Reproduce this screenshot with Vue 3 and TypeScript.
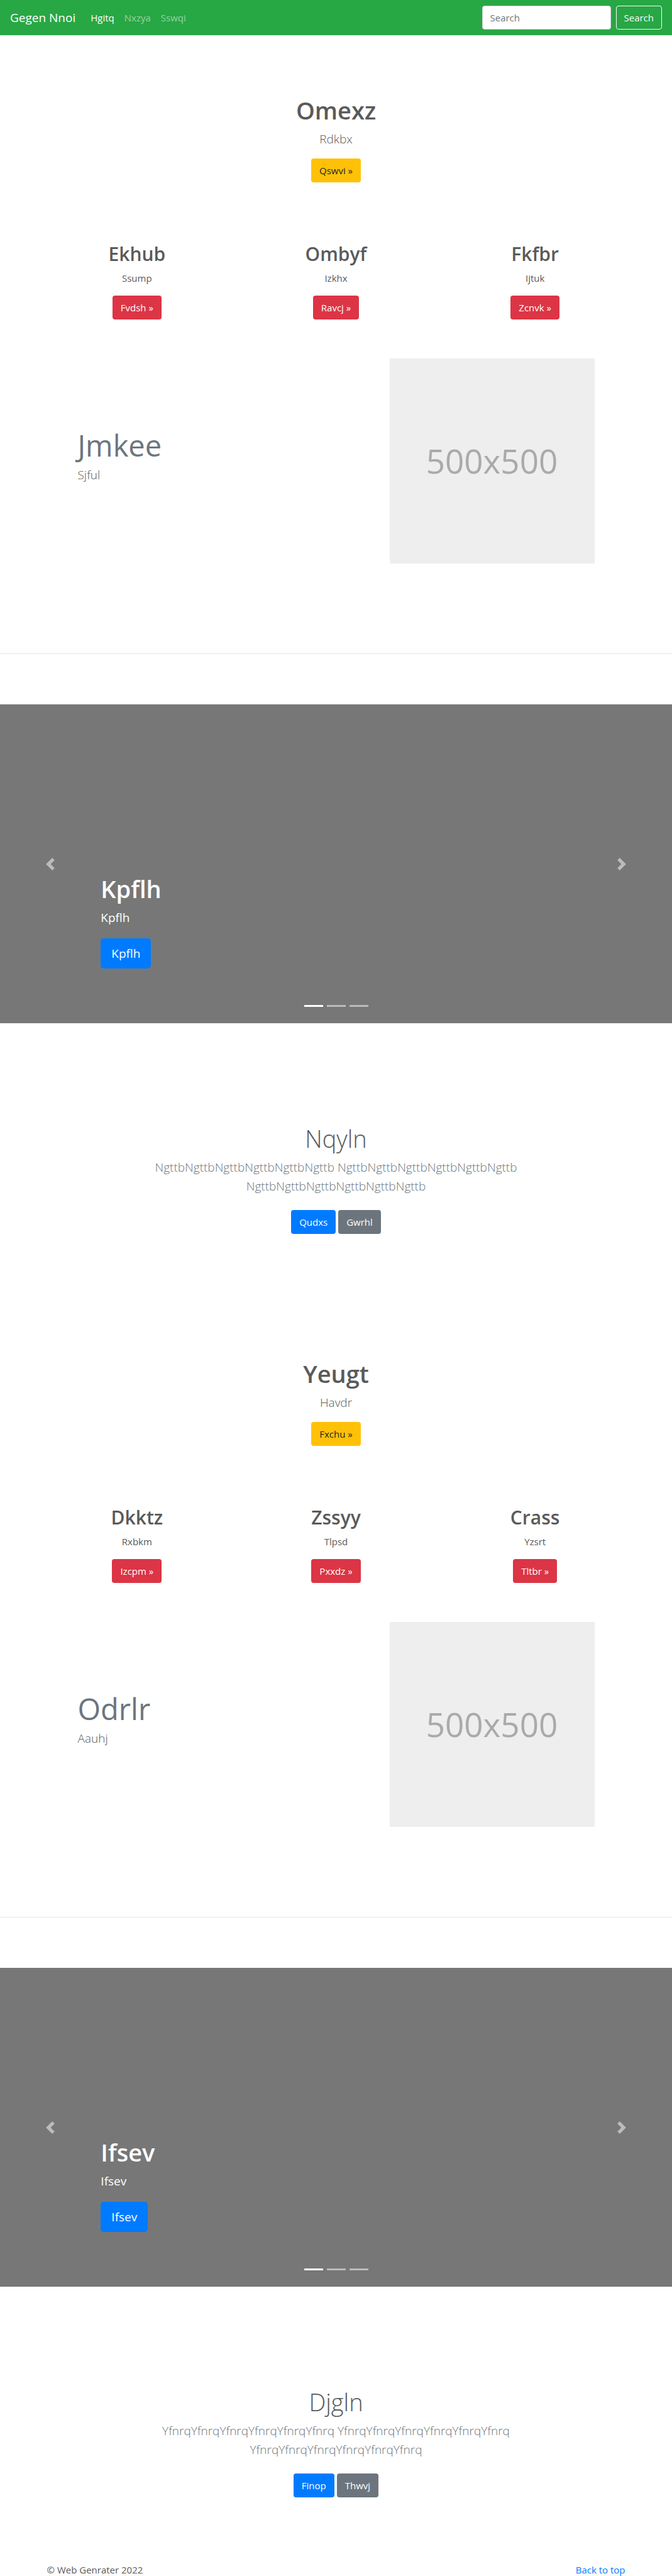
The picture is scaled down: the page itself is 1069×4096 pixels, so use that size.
<script setup lang="ts">
import { ref } from 'vue'

interface Card {
  title: string
  text: string
  action: string
}

interface Block {
  id: string
  hero: Card
  cards: Card[]
  feature: { title: string; text: string }
  slide: string
  outro: { title: string; text: string; primary: string; secondary: string }
}

const links: string[] = ['Hgitq', 'Nxzya', 'Sswqi']
const query = ref('')

const blocks: Block[] = [
  {
    id: 'first',
    hero: { title: 'Omexz', text: 'Rdkbx', action: 'Qswvi »' },
    cards: [
      { title: 'Ekhub', text: 'Ssump', action: 'Fvdsh »' },
      { title: 'Ombyf', text: 'Izkhx', action: 'Ravcj »' },
      { title: 'Fkfbr', text: 'Ijtuk', action: 'Zcnvk »' },
    ],
    feature: { title: 'Jmkee', text: 'Sjful' },
    slide: 'Kpflh',
    outro: {
      title: 'Nqyln',
      text: 'NgttbNgttbNgttbNgttbNgttbNgttb NgttbNgttbNgttbNgttbNgttbNgttb NgttbNgttbNgttbNgttbNgttbNgttb',
      primary: 'Qudxs',
      secondary: 'Gwrhl',
    },
  },
  {
    id: 'second',
    hero: { title: 'Yeugt', text: 'Havdr', action: 'Fxchu »' },
    cards: [
      { title: 'Dkktz', text: 'Rxbkm', action: 'Izcpm »' },
      { title: 'Zssyy', text: 'Tlpsd', action: 'Pxxdz »' },
      { title: 'Crass', text: 'Yzsrt', action: 'Tltbr »' },
    ],
    feature: { title: 'Odrlr', text: 'Aauhj' },
    slide: 'Ifsev',
    outro: {
      title: 'Djgln',
      text: 'YfnrqYfnrqYfnrqYfnrqYfnrqYfnrq YfnrqYfnrqYfnrqYfnrqYfnrqYfnrq YfnrqYfnrqYfnrqYfnrqYfnrqYfnrq',
      primary: 'Finop',
      secondary: 'Thwvj',
    },
  },
]
</script>

<template>
  <div id="top" class="page">
    <header class="navbar">
      <a class="brand" href="#top">Gegen Nnoi</a>
      <nav class="links">
        <a v-for="(link, i) in links" :key="link" href="#top" :class="{ active: i === 0 }">{{ link }}</a>
      </nav>
      <form class="search" @submit.prevent>
        <input v-model="query" type="search" placeholder="Search" aria-label="Search" />
        <button class="btn btn-outline" type="submit">Search</button>
      </form>
    </header>

    <main>
      <section v-for="block in blocks" :key="block.id" class="block">
        <div class="hero">
          <h1>{{ block.hero.title }}</h1>
          <p class="lead">{{ block.hero.text }}</p>
          <a class="btn btn-warning" href="#top">{{ block.hero.action }}</a>
        </div>

        <div class="cards">
          <article v-for="card in block.cards" :key="card.title" class="card">
            <h2>{{ card.title }}</h2>
            <p>{{ card.text }}</p>
            <a class="btn btn-danger" href="#top">{{ card.action }}</a>
          </article>
        </div>

        <div class="feature">
          <div class="feature-text">
            <h2>{{ block.feature.title }}</h2>
            <p class="lead">{{ block.feature.text }}</p>
          </div>
          <div class="placeholder">500x500</div>
        </div>

        <hr />

        <div class="carousel">
          <div class="caption">
            <h1>{{ block.slide }}</h1>
            <p>{{ block.slide }}</p>
            <a class="btn btn-primary btn-large" href="#top">{{ block.slide }}</a>
          </div>
          <button class="control prev" type="button" aria-label="Previous">
            <svg viewBox="0 0 8 8"><path d="M5.25 0l-4 4 4 4 1.5-1.5-2.5-2.5 2.5-2.5-1.5-1.5z" /></svg>
          </button>
          <button class="control next" type="button" aria-label="Next">
            <svg viewBox="0 0 8 8"><path d="M2.75 0l-1.5 1.5 2.5 2.5-2.5 2.5 1.5 1.5 4-4-4-4z" /></svg>
          </button>
          <div class="indicators">
            <button v-for="n in 3" :key="n" type="button" :class="{ active: n === 1 }" :aria-label="`Slide ${n}`"></button>
          </div>
        </div>

        <div class="outro">
          <h1>{{ block.outro.title }}</h1>
          <p class="lead">{{ block.outro.text }}</p>
          <div class="actions">
            <a class="btn btn-primary" href="#top">{{ block.outro.primary }}</a>
            <a class="btn btn-secondary" href="#top">{{ block.outro.secondary }}</a>
          </div>
        </div>
      </section>
    </main>

    <footer class="footer">
      <span>© Web Genrater 2022</span>
      <a href="#top">Back to top</a>
    </footer>
  </div>
</template>

<style>
body {
  margin: 0;
  background: #fff;
}
</style>

<style scoped>
.page {
  font: 400 15px/24px 'Open Sans', 'Noto Sans', sans-serif;
  color: #5a5a5a;
}

.page *,
.page *::before {
  box-sizing: border-box;
}

h1,
h2,
p {
  margin: 0;
}

a {
  color: #007bff;
  text-decoration: none;
}

h1 {
  font-size: 38px;
  line-height: 46px;
  font-weight: 600;
}

.lead {
  font-size: 19px;
  line-height: 30px;
  font-weight: 300;
}

.btn {
  display: inline-flex;
  align-items: center;
  height: 38px;
  padding: 0 12px;
  border: 1px solid transparent;
  border-radius: 4px;
  font: inherit;
  color: #fff;
  cursor: pointer;
}

.btn-large {
  height: 48px;
  padding: 0 16px;
  border-radius: 5px;
  font-size: 19px;
}

.btn-outline {
  background: transparent;
  border-color: #f8f9fa;
  color: #f8f9fa;
}

.btn-warning {
  background: #ffc107;
  color: #212529;
}

.btn-danger {
  background: #dc3545;
}

.btn-primary {
  background: #007bff;
}

.btn-secondary {
  background: #6c757d;
}

.navbar {
  display: flex;
  align-items: center;
  padding: 9px 16px;
  background: #28a745;
}

.brand {
  margin-right: 24px;
  font-size: 19px;
  line-height: 30px;
  color: #fff;
}

.links {
  display: flex;
  gap: 16px;
}

.links a {
  color: rgba(255, 255, 255, 0.5);
}

.links a.active {
  color: #fff;
}

.search {
  display: flex;
  gap: 8px;
  margin-left: auto;
}

.search input {
  width: 205px;
  height: 38px;
  padding: 0 12px;
  border: 1px solid #ced4da;
  border-radius: 4px;
  background: #fff;
  font: inherit;
  color: #495057;
  appearance: none;
}

.search input::placeholder {
  color: #6c757d;
  opacity: 1;
}

.hero {
  display: flex;
  flex-direction: column;
  align-items: center;
  padding: 96px 16px;
}

.hero .lead {
  margin: 8px 0 16px;
}

.cards {
  display: grid;
  grid-template-columns: repeat(3, 1fr);
  max-width: 950px;
  margin: 0 auto;
}

.card {
  display: flex;
  flex-direction: column;
  align-items: center;
}

.card h2 {
  font-size: 30px;
  line-height: 36px;
  font-weight: 600;
}

.card p {
  margin: 8px 0 16px;
}

.feature {
  display: flex;
  align-items: center;
  justify-content: space-between;
  max-width: 950px;
  margin: 62px auto 0;
  padding: 0 64px;
}

.feature-text h2 {
  font-size: 47px;
  line-height: 56px;
  font-weight: 400;
  color: #6c757d;
}

.feature-text .lead {
  margin: 4px 0 16px;
}

.placeholder {
  display: flex;
  align-items: center;
  justify-content: center;
  width: 326px;
  aspect-ratio: 1;
  background: #eee;
  font-size: 53px;
  line-height: 64px;
  color: #aaa;
}

hr {
  margin: 143px 0 80px;
  border: 0;
  border-top: 1px solid rgba(0, 0, 0, 0.1);
}

.carousel {
  position: relative;
  display: flex;
  align-items: flex-end;
  min-height: 507px;
  padding: 0 15% 87px;
  background: #777;
}

.caption {
  color: #fff;
}

.caption p {
  margin: 8px 0 18px;
  font-size: 19px;
  line-height: 30px;
}

.caption .btn {
  display: flex;
  width: fit-content;
}

.control {
  position: absolute;
  top: 0;
  bottom: 0;
  display: flex;
  align-items: center;
  justify-content: center;
  width: 15%;
  padding: 0;
  border: 0;
  background: none;
  opacity: 0.5;
  cursor: pointer;
}

.control svg {
  width: 20px;
  height: 20px;
  fill: #fff;
}

.prev {
  left: 0;
}

.next {
  right: 0;
}

.indicators {
  position: absolute;
  right: 0;
  bottom: 26px;
  left: 0;
  display: flex;
  justify-content: center;
  gap: 6px;
}

.indicators button {
  width: 30px;
  height: 3px;
  padding: 0;
  border: 0;
  background: #fff;
  opacity: 0.5;
}

.indicators button.active {
  opacity: 1;
}

.outro {
  max-width: 640px;
  margin: 0 auto;
  padding: 160px 0 103px;
  text-align: center;
}

.outro h1 {
  font-weight: 300;
}

.outro .lead {
  margin: 8px 0 23px;
  color: #6c757d;
}

.actions {
  display: flex;
  justify-content: center;
  gap: 4px;
}

.footer {
  display: flex;
  justify-content: space-between;
  max-width: 950px;
  margin: 0 auto;
  padding: 0 15px;
}
</style>
